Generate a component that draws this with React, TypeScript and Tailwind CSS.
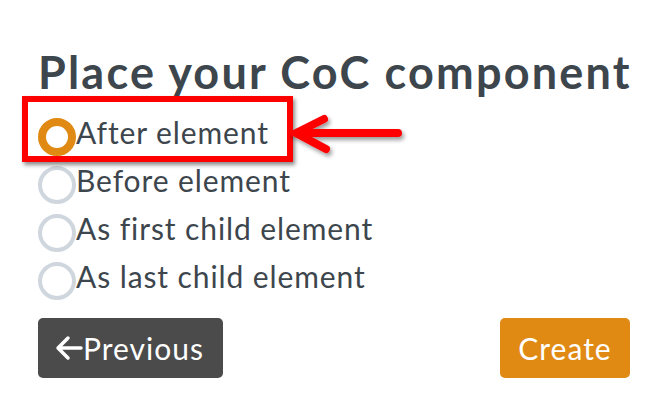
import { useState } from 'react';

const options = ['After element', 'Before element', 'As first child element', 'As last child element'];

function Radio({ checked }: { checked: boolean }) {
  return (
    <span
      className={
        checked
          ? 'block w-[38px] h-[38px] rounded-full border-[8px] border-[#e08a13] shrink-0'
          : 'block w-[38px] h-[38px] rounded-full border-[4px] border-[#cfd6dd] shrink-0'
      }
    />
  );
}

export default function App() {
  const [selected, setSelected] = useState(0);

  return (
    <div
      className="relative w-[666px] h-[418px] bg-white text-[#3d464d] overflow-hidden"
      style={{ fontFamily: 'Lato, "Open Sans", sans-serif' }}
    >
      <div className="flex flex-col px-[38px] pt-[48px]">
        <h1 className="text-[45px] leading-[48px] font-bold tracking-[2.2px] whitespace-nowrap">Place your CoC component</h1>

        <div className="flex flex-col mt-[17px]">
          {options.map((label, i) => (
            <label
              key={label}
              onClick={() => setSelected(i)}
              className="flex items-center h-[48px] cursor-pointer"
            >
              <Radio checked={selected === i} />
              <span className="text-[30px] leading-none tracking-[0.9px] pb-[11px]">{label}</span>
            </label>
          ))}
        </div>

        <div className="flex justify-between items-center mt-[13px]">
          <button className="flex items-center h-[60px] w-[185px] pl-[17px] rounded-[5px] bg-[#4b4b4b] text-white text-[30px] tracking-[1px]">
            <svg width="28" height="28" viewBox="0 0 28 28" className="shrink-0">
              <path d="M26 14H4M13 4L3 14l10 10" fill="none" stroke="white" strokeWidth="3.5" strokeLinecap="round" strokeLinejoin="round" />
            </svg>
            Previous
          </button>
          <button className="h-[60px] w-[130px] mr-[-2px] rounded-[5px] bg-[#e08a13] text-white text-[30px] tracking-[1px]">Create</button>
        </div>
      </div>

      {/* annotation: highlight box */}
      <div className="absolute left-[22px] top-[96px] w-[271px] h-[66px] border-[6px] border-[#ff0000] shadow-[2px_3px_4px_rgba(0,0,0,0.45)]" />

      {/* annotation: arrow */}
      <svg className="absolute left-[290px] top-[110px]" width="120" height="56" viewBox="0 0 120 56">
        <defs>
          <filter id="sh" x="-20%" y="-40%" width="140%" height="180%">
            <feDropShadow dx="2" dy="3" stdDeviation="2" floodColor="#000" floodOpacity="0.4" />
          </filter>
        </defs>
        <g filter="url(#sh)" fill="none" stroke="#ff0000" strokeWidth="8" strokeLinecap="round" strokeLinejoin="miter">
          <path d="M108 23H10" />
          <path d="M34 9L6 23l30 16" />
        </g>
      </svg>
    </div>
  );
}
